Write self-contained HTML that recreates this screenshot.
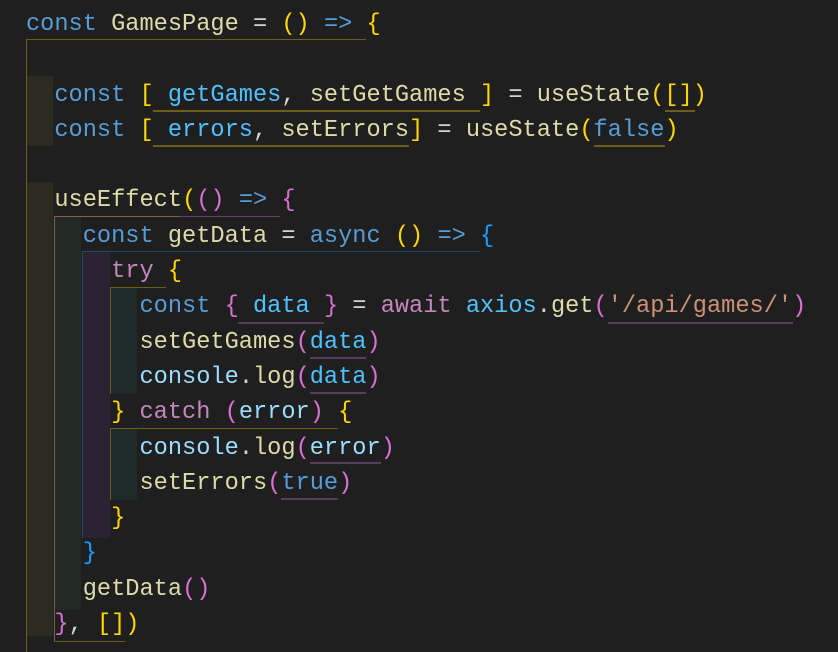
<!DOCTYPE html>
<html><head><style>
html,body{margin:0;padding:0;background:#1f1f1f;width:838px;height:652px;overflow:hidden;position:relative}
.b{position:absolute}
pre{position:absolute;left:26px;top:7px;margin:0;font-family:"Liberation Mono",monospace;font-size:23.65px;line-height:35.3px;color:#d4d4d4;white-space:pre}
.k{color:#569cd6}.f{color:#dcdcaa}.v{color:#9cdcfe}.c{color:#4fc1ff}.p{color:#c586c0}.s{color:#ce9178}
.g{color:#ffd700}.m{color:#da70d6}.u{color:#179fff}
</style></head><body>
<div class="b" style="left:26px;top:76px;width:27px;height:70px;background:#2c2b22"></div>
<div class="b" style="left:26px;top:182px;width:27px;height:454px;background:#2c2b22"></div>
<div class="b" style="left:55px;top:217px;width:26px;height:393px;background:#222a25"></div>
<div class="b" style="left:83px;top:252px;width:27px;height:286px;background:#2a2230"></div>
<div class="b" style="left:111px;top:287px;width:26px;height:107px;background:#1f2b2b"></div>
<div class="b" style="left:111px;top:428px;width:26px;height:72px;background:#1f2b2b"></div>
<div class="b" style="left:26px;top:39px;width:340px;height:1px;background:#6b5d1a"></div>
<div class="b" style="left:26px;top:39px;width:1px;height:613px;background:#6b5d1a"></div>
<div class="b" style="left:54px;top:216px;width:126px;height:1px;background:#8a5d4a"></div>
<div class="b" style="left:180px;top:216px;width:100px;height:1px;background:#6a3a6a"></div>
<div class="b" style="left:54px;top:216px;width:1px;height:425px;background:#8a5d4a"></div>
<div class="b" style="left:54px;top:641px;width:71px;height:1px;background:#6b5d1a"></div>
<div class="b" style="left:82px;top:251px;width:398px;height:1px;background:#1f4a6e"></div>
<div class="b" style="left:82px;top:251px;width:1px;height:287px;background:#1f4a6e"></div>
<div class="b" style="left:110px;top:287px;width:56px;height:1px;background:#6b5d1a"></div>
<div class="b" style="left:110px;top:287px;width:1px;height:107px;background:#6b5d1a"></div>
<div class="b" style="left:110px;top:428px;width:228px;height:1px;background:#6b5d1a"></div>
<div class="b" style="left:110px;top:428px;width:1px;height:72px;background:#6b5d1a"></div>
<div class="b" style="left:153px;top:110px;width:327px;height:2px;background:#6b5d1a"></div>
<div class="b" style="left:665px;top:110px;width:30px;height:2px;background:#6b5d1a"></div>
<div class="b" style="left:153px;top:145px;width:256px;height:2px;background:#6b5d1a"></div>
<div class="b" style="left:594px;top:145px;width:71px;height:2px;background:#6b5d1a"></div>
<div class="b" style="left:238px;top:322px;width:86px;height:2px;background:#5a3a5e"></div>
<div class="b" style="left:608px;top:322px;width:185px;height:2px;background:#5a3a5e"></div>
<div class="b" style="left:310px;top:357px;width:56px;height:2px;background:#5a3a5e"></div>
<div class="b" style="left:310px;top:392px;width:56px;height:2px;background:#5a3a5e"></div>
<div class="b" style="left:310px;top:462px;width:71px;height:2px;background:#5a3a5e"></div>
<div class="b" style="left:281px;top:498px;width:57px;height:2px;background:#5a3a5e"></div>
<pre><span class="k">const</span> <span class="f">GamesPage</span> = <span class="g">()</span> <span class="k">=&gt;</span> <span class="g">{</span>

  <span class="k">const</span> <span class="g">[</span> <span class="c">getGames</span>, <span class="f">setGetGames</span> <span class="g">]</span> = <span class="f">useState</span><span class="g">([])</span>
  <span class="k">const</span> <span class="g">[</span> <span class="c">errors</span>, <span class="f">setErrors</span><span class="g">]</span> = <span class="f">useState</span><span class="g">(</span><span class="k">false</span><span class="g">)</span>

  <span class="f">useEffect</span><span class="g">(</span><span class="m">()</span> <span class="k">=&gt;</span> <span class="m">{</span>
    <span class="k">const</span> <span class="f">getData</span> = <span class="k">async</span> <span class="g">()</span> <span class="k">=&gt;</span> <span class="u">{</span>
      <span class="p">try</span> <span class="g">{</span>
        <span class="k">const</span> <span class="m">{</span> <span class="c">data</span> <span class="m">}</span> = <span class="p">await</span> <span class="c">axios</span>.<span class="f">get</span><span class="m">(</span><span class="s">'/api/games/'</span><span class="m">)</span>
        <span class="f">setGetGames</span><span class="m">(</span><span class="c">data</span><span class="m">)</span>
        <span class="v">console</span>.<span class="f">log</span><span class="m">(</span><span class="c">data</span><span class="m">)</span>
      <span class="g">}</span> <span class="p">catch</span> <span class="m">(</span><span class="v">error</span><span class="m">)</span> <span class="g">{</span>
        <span class="v">console</span>.<span class="f">log</span><span class="m">(</span><span class="v">error</span><span class="m">)</span>
        <span class="f">setErrors</span><span class="m">(</span><span class="k">true</span><span class="m">)</span>
      <span class="g">}</span>
    <span class="u">}</span>
    <span class="f">getData</span><span class="m">()</span>
  <span class="m">}</span>, <span class="g">[])</span></pre>
</body></html>
